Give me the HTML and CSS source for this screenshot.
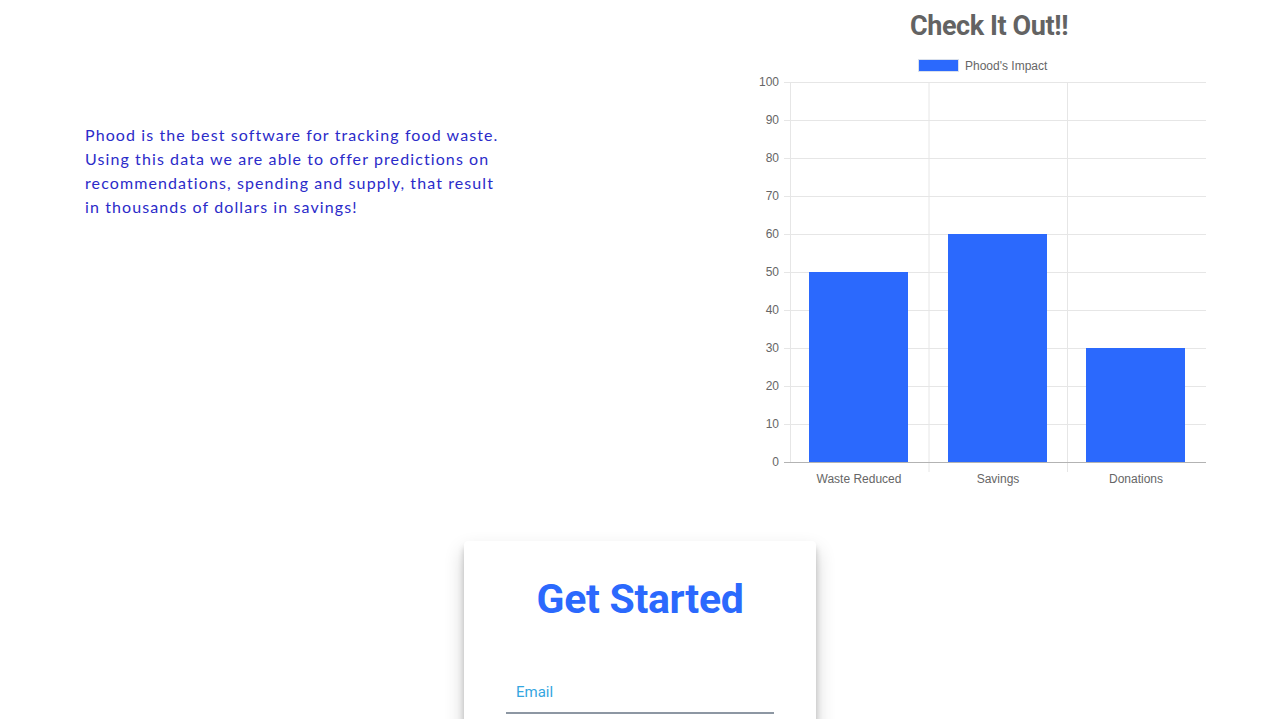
FILE: index.html
```html
<!DOCTYPE html>
<html lang="en">
<head>
<meta charset="utf-8">
<title>Phood</title>
<link rel="stylesheet" href="styles.css">
</head>
<body>
<div class="page">
  <section class="top">
    <p class="intro">Phood is the best software for tracking food waste. Using this data we are able to offer predictions on recommendations, spending and supply, that result in thousands of dollars in savings!</p>
    <div class="chart-col">
      <h2 class="chart-title">Check It Out!!</h2>
      <svg class="chart" width="480" height="450" viewBox="0 0 480 450">
        <g class="legend">
          <rect x="169.5" y="9.5" width="40" height="12" class="legend-box"/>
          <text x="216" y="16" class="lbl">Phood's Impact</text>
        </g>
        <g class="grid">
          <line x1="35" x2="457" y1="32.5" y2="32.5"/>
          <line x1="35" x2="457" y1="70.5" y2="70.5"/>
          <line x1="35" x2="457" y1="108.5" y2="108.5"/>
          <line x1="35" x2="457" y1="146.5" y2="146.5"/>
          <line x1="35" x2="457" y1="184.5" y2="184.5"/>
          <line x1="35" x2="457" y1="222.5" y2="222.5"/>
          <line x1="35" x2="457" y1="260.5" y2="260.5"/>
          <line x1="35" x2="457" y1="298.5" y2="298.5"/>
          <line x1="35" x2="457" y1="336.5" y2="336.5"/>
          <line x1="35" x2="457" y1="374.5" y2="374.5"/>
          <line x1="41.5" x2="41.5" y1="32" y2="412"/>
          <line x1="180" x2="180" y1="32" y2="422"/>
          <line x1="318.5" x2="318.5" y1="32" y2="422"/>
        </g>
        <g class="bars">
          <rect x="60" y="222" width="99" height="190"/>
          <rect x="199" y="184" width="99" height="228"/>
          <rect x="337" y="298" width="99" height="114"/>
        </g>
        <line class="zero" x1="35" x2="457" y1="412.5" y2="412.5"/>
        <g class="ylabels lbl">
          <text x="30" y="32">100</text>
          <text x="30" y="70">90</text>
          <text x="30" y="108">80</text>
          <text x="30" y="146">70</text>
          <text x="30" y="184">60</text>
          <text x="30" y="222">50</text>
          <text x="30" y="260">40</text>
          <text x="30" y="298">30</text>
          <text x="30" y="336">20</text>
          <text x="30" y="374">10</text>
          <text x="30" y="412">0</text>
        </g>
        <g class="xlabels lbl">
          <text x="110" y="429">Waste Reduced</text>
          <text x="249" y="429">Savings</text>
          <text x="387" y="429">Donations</text>
        </g>
      </svg>
    </div>
  </section>
  <section class="signup">
    <div class="card">
      <h1 class="card-title">Get Started</h1>
      <input class="field" type="email" placeholder="Email">
    </div>
  </section>
</div>
</body>
</html>
```
FILE: styles.css
```css
html, body {
  margin: 0;
  padding: 0;
  background: #ffffff;
}

body {
  font-family: "Lato", "Open Sans", sans-serif;
}

.page {
  display: flex;
  flex-direction: column;
}

.top {
  display: flex;
  justify-content: space-between;
  align-items: flex-start;
  height: 500px;
}

.intro {
  margin: 123px 0 0 85px;
  width: 420px;
  font-family: "Lato", sans-serif;
  font-size: 16px;
  line-height: 24px;
  letter-spacing: 1.1px;
  color: #2b2bc9;
}

.chart-col {
  width: 480px;
  margin-right: 51px;
  display: flex;
  flex-direction: column;
}

.chart-title {
  margin: 0 0 4px 0;
  padding-top: 6px;
  line-height: 40px;
  font-family: "Roboto", sans-serif;
  font-weight: 700;
  font-size: 27px;
  letter-spacing: -0.4px;
  color: #636363;
  text-align: center;
}

.chart {
  display: block;
}

.chart .lbl,
.chart .lbl text {
  font-family: "Liberation Sans", Arial, sans-serif;
  font-size: 12px;
  fill: #666666;
  dominant-baseline: central;
}

.chart .ylabels text {
  text-anchor: end;
}

.chart .xlabels text {
  text-anchor: middle;
}

.chart .legend-box {
  fill: #2b69fd;
  stroke: #d9e0ec;
  stroke-width: 1;
}

.chart .grid line {
  stroke: #e6e6e6;
  stroke-width: 1;
}

.chart .zero {
  stroke: #b3b3b3;
  stroke-width: 1;
}

.chart .bars rect {
  fill: #2b69fd;
}

.signup {
  display: flex;
  justify-content: center;
  margin-top: 41px;
}

.card {
  width: 352px;
  box-sizing: border-box;
  padding: 33px 42px 60px;
  background: #ffffff;
  border-radius: 4px;
  box-shadow: 0 10px 20px rgba(0, 0, 0, 0.19), 0 6px 6px rgba(0, 0, 0, 0.2);
  display: flex;
  flex-direction: column;
}

.card-title {
  margin: 0 0 53px 0;
  font-family: "Roboto", sans-serif;
  font-weight: 700;
  font-size: 41px;
  letter-spacing: -0.3px;
  line-height: 50px;
  color: #2b69fd;
  text-align: center;
}

.field {
  display: block;
  width: 100%;
  box-sizing: border-box;
  border: none;
  border-bottom: 2px solid #8d97a3;
  outline: none;
  padding: 6px 10px 11px;
  font-family: "Roboto", sans-serif;
  font-size: 15px;
  line-height: 18px;
  color: #333333;
  background: transparent;
}

.field::placeholder {
  color: #34a6df;
  opacity: 1;
}
```
